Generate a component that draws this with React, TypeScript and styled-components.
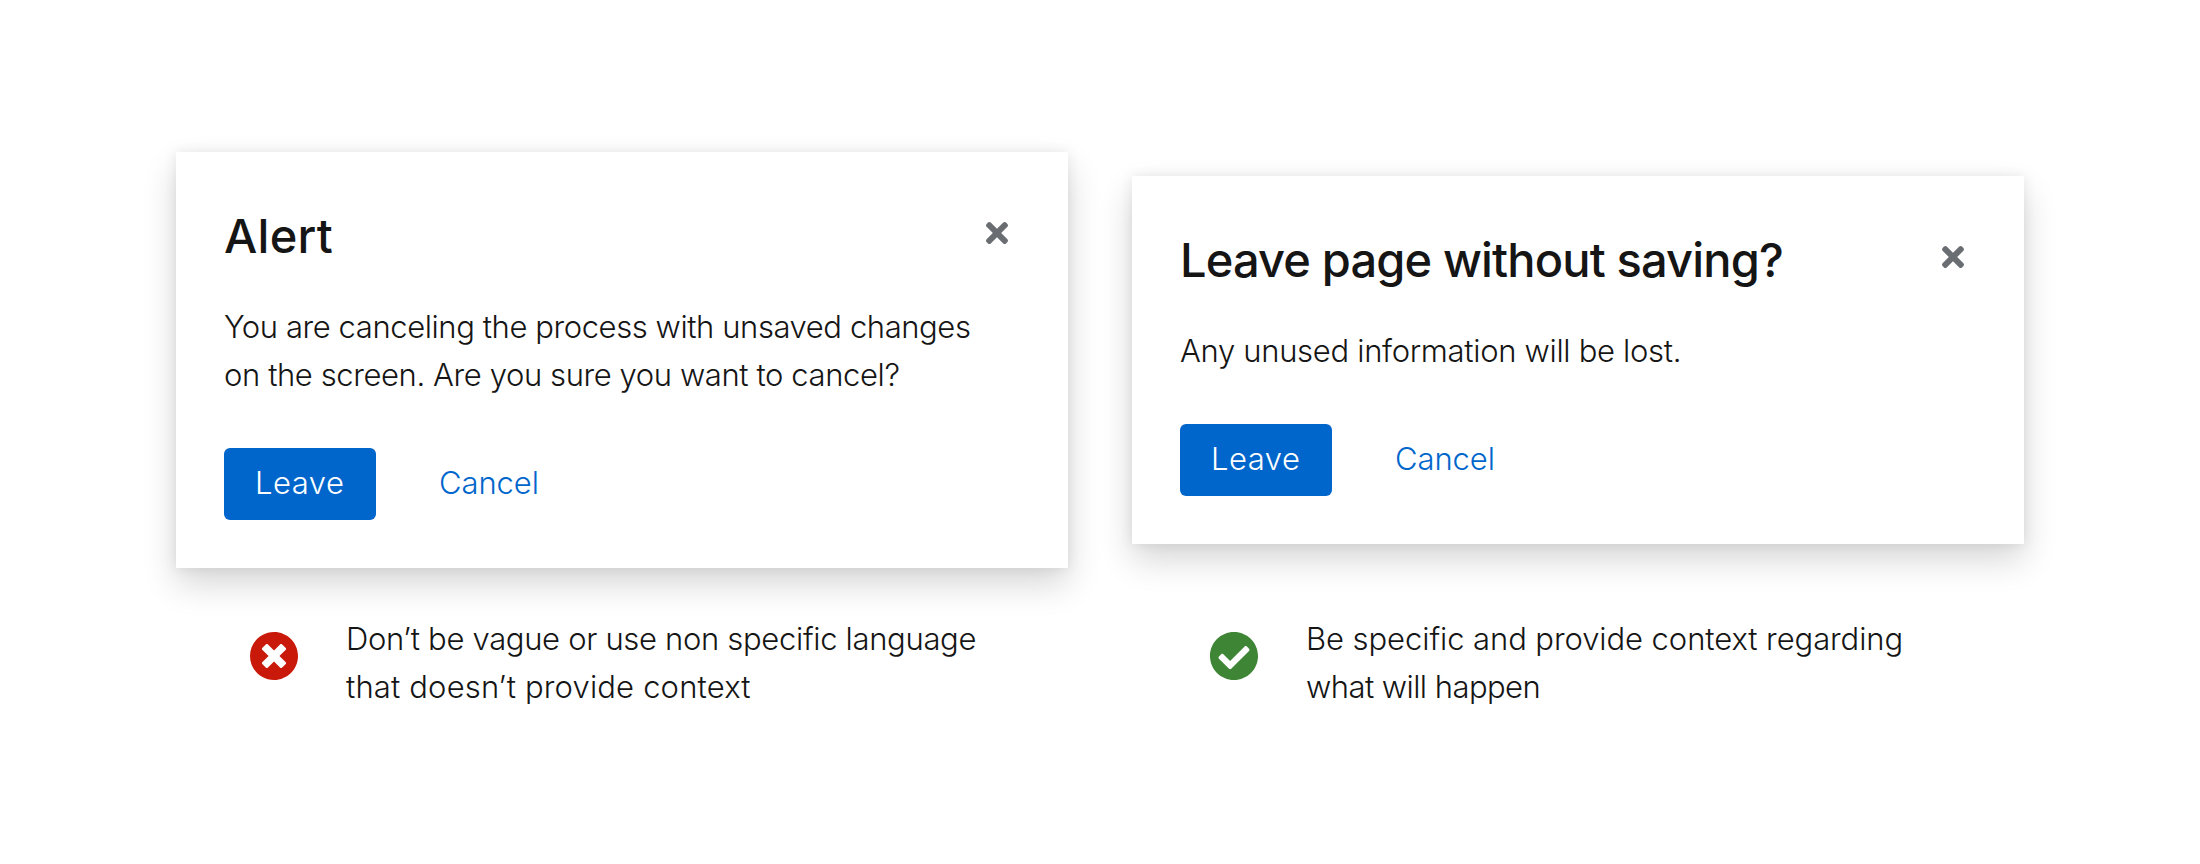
import React from 'react';
import styled, { createGlobalStyle } from 'styled-components';
import { FaTimes, FaTimesCircle, FaCheckCircle } from 'react-icons/fa';

const GlobalStyle = createGlobalStyle`
  *, *::before, *::after { box-sizing: border-box; }
  body {
    margin: 0;
    background: #fff;
    color: #151515;
    font-family: Inter, "Open Sans", sans-serif;
    font-size: 31px;
    font-weight: 300;
    line-height: 48px;
  }
`;

const Page = styled.main`
  display: flex;
  gap: 64px;
  width: 2200px;
  height: 864px;
  padding: 0 176px;
`;

const Example = styled.section`
  display: flex;
  flex-direction: column;
  width: 892px;
`;

const Stage = styled.div`
  display: flex;
  align-items: center;
  height: 615px;
  padding-top: 105px;
`;

const Modal = styled.article`
  width: 100%;
  padding: 48px;
  background: #fff;
  box-shadow: 0 16px 32px rgba(3, 3, 3, 0.16), 0 0 12px rgba(3, 3, 3, 0.08);
`;

const ModalHeader = styled.header`
  display: flex;
  justify-content: space-between;
  margin-bottom: 31px;
`;

const Line = styled.span<{ $tracking: number }>`
  display: block;
  white-space: nowrap;
  letter-spacing: ${({ $tracking }) => $tracking}px;
`;

const Title = styled.h1`
  margin: 0;
  font-size: 47px;
  font-weight: 500;
  line-height: 72px;
`;

const CloseButton = styled.button`
  display: flex;
  align-self: flex-start;
  margin: 17px 7px 0 0;
  padding: 0;
  border: 0;
  background: none;
  color: #6a6e73;

  svg { width: 32px; height: 32px; }
`;

const Copy = styled.p`
  margin: 0;
`;

const Actions = styled.footer`
  display: flex;
  gap: 32px;
  margin-top: 49px;
`;

const Button = styled.button<{ $primary?: boolean }>`
  height: 72px;
  width: ${({ $primary }) => ($primary ? '152px' : 'auto')};
  padding: 11px 31px 13px;
  border: 0;
  border-radius: 6px;
  background: ${({ $primary }) => ($primary ? '#0066cc' : 'transparent')};
  color: ${({ $primary }) => ($primary ? '#fff' : '#0066cc')};
  font: inherit;
  text-align: left;
`;

const Note = styled.div<{ $indent: number }>`
  display: flex;
  gap: 48px;
  padding-left: ${({ $indent }) => $indent}px;
`;

const StatusIcon = styled.span<{ $color: string }>`
  display: flex;
  margin-top: 17px;
  width: 48px;
  height: 48px;
  color: ${({ $color }) => $color};

  svg { width: 48px; height: 48px; }
`;

type TextLine = [text: string, tracking: number];

const Lines = ({ items }: { items: TextLine[] }) => (
  <>
    {items.map(([text, tracking]) => (
      <Line key={text} $tracking={tracking}>{text}</Line>
    ))}
  </>
);

interface AlertModalProps {
  title: TextLine;
  body: TextLine[];
}

const AlertModal = ({ title, body }: AlertModalProps) => (
  <Modal>
    <ModalHeader>
      <Title><Lines items={[title]} /></Title>
      <CloseButton aria-label="Close"><FaTimes viewBox="-80 0 512 512" /></CloseButton>
    </ModalHeader>
    <Copy><Lines items={body} /></Copy>
    <Actions>
      <Button $primary><Lines items={[['Leave', 0.5]]} /></Button>
      <Button><Lines items={[['Cancel', -0.1]]} /></Button>
    </Actions>
  </Modal>
);

export default function App() {
  return (
    <>
      <GlobalStyle />
      <Page>
        <Example>
          <Stage>
            <AlertModal
              title={['Alert', 0.27]}
              body={[
                ['You are canceling the process with unsaved changes', -0.418],
                ['on the screen. Are you sure you want to cancel?', -0.402],
              ]}
            />
          </Stage>
          <Note $indent={74}>
            <StatusIcon $color="#c9190b"><FaTimesCircle viewBox="8 8 496 496" /></StatusIcon>
            <Copy>
              <Lines items={[
                ['Don’t be vague or use non specific language', -0.325],
                ['that doesn’t provide context', 0.159],
              ]} />
            </Copy>
          </Note>
        </Example>
        <Example>
          <Stage>
            <AlertModal
              title={['Leave page without saving?', -0.848]}
              body={[['Any unused information will be lost.', -0.315]]}
            />
          </Stage>
          <Note $indent={78}>
            <StatusIcon $color="#3e8635"><FaCheckCircle viewBox="8 8 496 496" /></StatusIcon>
            <Copy>
              <Lines items={[
                ['Be specific and provide context regarding', -0.08],
                ['what will happen', -0.55],
              ]} />
            </Copy>
          </Note>
        </Example>
      </Page>
    </>
  );
}
